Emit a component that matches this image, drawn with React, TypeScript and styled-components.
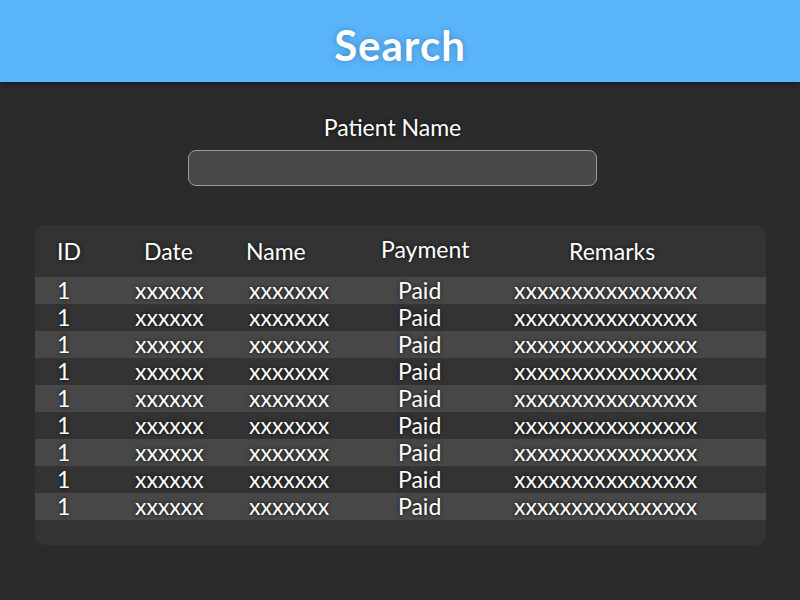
import React from "react";
import styled, { createGlobalStyle } from "styled-components";

const Global = createGlobalStyle`
  html, body { margin: 0; padding: 0; background: #2b2b2b; }
  body { font-family: Lato, "Open Sans", sans-serif; color: #fff; }
`;

const Page = styled.div`
  width: 800px;
  height: 600px;
  background: #2b2b2b;
  display: flex;
  flex-direction: column;
  overflow: hidden;
`;

const Header = styled.header`
  height: 82px;
  box-sizing: border-box;
  padding-top: 8px;
  background: #5ab4fa;
  display: flex;
  align-items: center;
  justify-content: center;
  box-shadow: 0 2px 6px rgba(0, 0, 0, 0.45);
  position: relative;
  z-index: 1;
`;

const Title = styled.h1`
  margin: 0;
  font-size: 42px;
  font-weight: 700;
  color: #fff;
  text-shadow: 0 0 6px rgba(0, 0, 0, 0.25);
  letter-spacing: 1px;
`;

const Form = styled.div`
  display: flex;
  flex-direction: column;
  align-items: center;
  margin-top: 32px;
  margin-left: -15px;
`;

const Label = styled.label`
  font-size: 23px;
  color: #fff;
  text-shadow: 0 0 4px rgba(0, 0, 0, 0.8);
  line-height: 26px;
`;

const Input = styled.input`
  margin-top: 10px;
  width: 409px;
  height: 36px;
  box-sizing: border-box;
  background: #484848;
  border: 1px solid #9a9a9a;
  border-radius: 8px;
  outline: none;
  color: #fff;
  font-family: inherit;
  font-size: 18px;
  padding: 0 10px;
`;

const Card = styled.div`
  margin: 39px 0 0 35px;
  width: 731px;
  height: 320px;
  box-sizing: border-box;
  background: #333333;
  border-radius: 10px;
  padding-top: 52px;
  position: relative;
`;

const Row = styled.div<{ $cols: string; $stripe?: boolean }>`
  display: grid;
  grid-template-columns: ${(p) => p.$cols};
  height: 27px;
  align-items: center;
  padding-left: 22px;
  background: ${(p) => (p.$stripe ? "#474747" : "transparent")};
  font-size: 23px;
  line-height: 27px;
  text-shadow: 0 0 4px rgba(0, 0, 0, 0.8);
  white-space: nowrap;
`;

const HeadRow = styled(Row)`
  position: absolute;
  top: 11px;
  left: 0;
  right: 0;
  height: 30px;
`;

const HeadCell = styled.span<{ $lift?: boolean }>`
  position: relative;
  top: ${(p) => (p.$lift ? "-2px" : "0")};
`;

const headCols = "87px 102px 135px 188px 1fr";
const rowCols = "78px 114px 149px 116px 1fr";

export default function App() {
  const rows = Array.from({ length: 9 }, (_, i) => i);
  return (
    <Page>
      <Global />
      <Header>
        <Title>Search</Title>
      </Header>
      <Form>
        <Label htmlFor="pn">Patient Name</Label>
        <Input id="pn" />
      </Form>
      <Card>
        <HeadRow $cols={headCols}>
          <HeadCell>ID</HeadCell>
          <HeadCell>Date</HeadCell>
          <HeadCell>Name</HeadCell>
          <HeadCell $lift>Payment</HeadCell>
          <HeadCell>Remarks</HeadCell>
        </HeadRow>
        {rows.map((i) => (
          <Row key={i} $cols={rowCols} $stripe={i % 2 === 0}>
            <span>1</span>
            <span>xxxxxx</span>
            <span>xxxxxxx</span>
            <span>Paid</span>
            <span>xxxxxxxxxxxxxxxx</span>
          </Row>
        ))}
      </Card>
    </Page>
  );
}
